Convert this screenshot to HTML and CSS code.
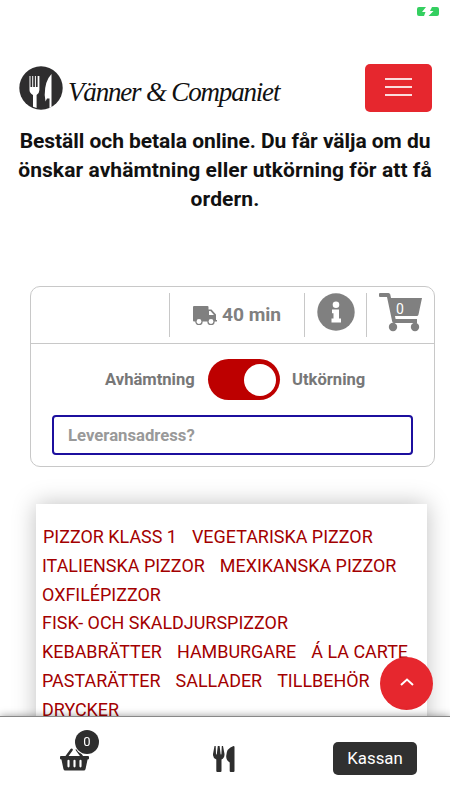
FILE: index.html
```html
<!DOCTYPE html>
<html lang="sv">
<head>
<meta charset="utf-8">
<meta name="viewport" content="width=device-width, initial-scale=1">
<title>Vänner &amp; Companiet</title>
<link rel="stylesheet" href="styles.css">
</head>
<body>
<svg class="battery" viewBox="0 0 22 9"><path d="M2 0h7L5 5h3.500L7 9H2Q0 9 0 7V2Q0 0 2 0ZM15 0h5q2 0 2 2v5q0 2-2 2h-8.500l5-5h-3.500Z"/></svg>
<header class="header">
  <div class="brand">
    <svg class="brand-mark" viewBox="0 0 44 44"><circle cx="22" cy="22" r="21.700" fill="#2e2d2e"/><path fill="#fff" d="M10.500 10h1v11h1.700V10h1v11h1.700V10h1v11h1.700V10h1.800v14q0 3-2.800 5V42l-3.600-1.200V29q-3.500-2-3.500-5ZM32.500 8V41l-2 1V32.500H28l-1.500 3-.8-6.500q0-14 6.800-21Z"/></svg>
    <span class="brand-name">Vänner &amp; Companiet</span>
  </div>
  <button class="menu-button" aria-label="Meny"><i></i><i></i><i></i></button>
</header>
<h1 class="intro"><span class="l1">Beställ och betala online. Du får välja om du</span><span class="l2">önskar avhämtning eller utkörning för att få</span><span class="l3">ordern.</span></h1>
<section class="order">
  <div class="order-top">
    <div class="cell"></div>
    <div class="cell time"><svg viewBox="0 0 24 19"><path fill="#808080" fill-rule="evenodd" d="M1 0H14.500q1 0 1 1v2.500h3l4.500 5V14h1v1.500H1Q0 15.500 0 14.500V1Q0 0 1 0ZM16 5v4h5l-3.500-4Z"/><g fill="#fff" stroke="#808080" stroke-width="1.300"><circle cx="6" cy="15.500" r="3.100"/><circle cx="18" cy="15.500" r="3.100"/></g></svg><span>40 min</span></div>
    <div class="cell"><svg class="info" viewBox="0 0 38 38"><circle cx="19" cy="19" r="18.700" fill="#808080"/><path fill="#fff" d="M15 16.500h7v9h2v4h-9.500v-4h2v-5.200H15Z"/><circle cx="19" cy="11.800" r="3.300" fill="#fff"/></svg></div>
    <div class="cell cart"><svg viewBox="0 0 43 39"><path fill="#808080" d="M1 0h8.500q1.300 0 1.800 1.500L12 5h31l-3.500 16.500q-.3 1.500-1.800 1.500H16l.6 3H38v4H15q-1.500 0-1.800-1.500L8 4H1Q0 4 0 3V1Q0 0 1 0Z"/><circle cx="14" cy="34" r="4.200" fill="#808080"/><circle cx="36" cy="34" r="4.200" fill="#808080"/></svg><span>0</span></div>
  </div>
  <div class="choice"><span class="pick">Avhämtning</span><span class="switch"></span><span>Utkörning</span></div>
  <input class="address" type="text" placeholder="Leveransadress?">
</section>
<nav class="categories">
  <div class="first"><a>PIZZOR KLASS 1</a><a>VEGETARISKA PIZZOR</a></div>
  <div><a>ITALIENSKA PIZZOR</a><a>MEXIKANSKA PIZZOR</a></div>
  <div><a>OXFILÉPIZZOR</a></div>
  <div><a>FISK- OCH SKALDJURSPIZZOR</a></div>
  <div><a>KEBABRÄTTER</a><a>HAMBURGARE</a><a>Á LA CARTE</a></div>
  <div><a>PASTARÄTTER</a><a>SALLADER</a><a>TILLBEHÖR</a></div>
  <div><a>DRYCKER</a></div>
</nav>
<button class="to-top" aria-label="Till toppen"><svg viewBox="0 0 14 8"><path d="M1 7l6-5.500L13 7" fill="none" stroke="#fff" stroke-width="2"/></svg></button>
<footer class="bottom-bar">
  <div class="basket"><svg viewBox="0 0 30 25"><path d="M6.500 11L12 3.500M23 11L17.500 3.500" fill="none" stroke="#2e2e2e" stroke-width="2.600" stroke-linecap="round"/><path fill="#2e2e2e" d="M1 10h28q1 0 1 1v1.500q0 1-1.500 1L26.500 23q-.3 2-2 2h-19q-1.700 0-2-2L1.500 13.500Q0 13.500 0 12.500V11q0-1 1-1Z"/><path d="M8.800 14.800v5.800M15 14.800v5.800M21.200 14.800v5.800" stroke="#fff" stroke-width="2.200" stroke-linecap="round"/></svg><span class="badge">0</span></div>
  <svg class="cutlery" viewBox="0 0 22 26"><path fill="#2e2e2e" d="M1.500 0h1.200L3 8q.4 1 .8 0L4.800 0h1.800l1 8q.4 1 .8 0L8.800 0H10l1.500 8q.2 4-3 5.500V25q0 1-1 1H4.300q-1 0-1-1V13.500Q-.3 12 0 8ZM21.500 1V25q0 1-1 1H17.700q-1 0-1-1v-8.500Q13 14 13.200 10 13.500 2 20.500 0q1 0 1 1Z"/></svg>
  <button class="checkout">Kassan</button>
</footer>
</body>
</html>
```
FILE: styles.css
```css
* { box-sizing: border-box; }
body {
  margin: 0;
  width: 450px;
  height: 800px;
  overflow: hidden;
  background: #fff;
  font-family: Roboto, "Liberation Sans", sans-serif;
}
button { border: 0; padding: 0; font: inherit; }
svg { display: block; }
.battery { position: absolute; left: 417px; top: 7px; width: 22px; height: 9px; fill: #34cf60; }
.header {
  display: flex;
  justify-content: space-between;
  align-items: flex-start;
  padding: 64px 18px 0 19px;
  height: 127px;
}
.brand { display: flex; align-items: flex-start; margin-top: 2px; gap: 5px; }
.brand-mark { width: 44px; height: 44px; }
.brand-name {
  font-family: "Z003", "URW Chancery L", "Liberation Serif", serif;
  font-style: italic;
  font-size: 27px;
  line-height: 52px;
  letter-spacing: -1.18px;
  white-space: nowrap;
  color: #111;
}
.menu-button {
  width: 67px;
  height: 48px;
  border-radius: 5px;
  background: #e6272e;
  display: flex;
  flex-direction: column;
  align-items: center;
  justify-content: center;
  gap: 6px;
  padding-bottom: 2px;
}
.menu-button i { width: 27px; height: 2px; background: #fbdcdd; }
.intro {
  margin: 0;
  font-size: 21px;
  line-height: 29px;
  font-weight: 700;
  text-align: center;
  color: #111;
  white-space: nowrap;
}
.intro span { display: block; }
.l1 { letter-spacing: -0.05px; }
.l2 { letter-spacing: 0.07px; }
.l3 { letter-spacing: 0.1px; }
.order {
  margin: 72px 15px 0 30px;
  height: 181px;
  border: 1px solid #c8c8c8;
  border-radius: 10px;
}
.order-top {
  height: 57px;
  border-bottom: 1px solid #c8c8c8;
  display: grid;
  grid-template-columns: 138px 135px 62px 1fr;
  padding: 6px 0;
}
.cell { display: flex; align-items: center; justify-content: center; }
.cell + .cell { border-left: 1px solid #c8c8c8; }
.time { gap: 5px; padding-bottom: 1px; font-size: 19.2px; font-weight: 700; color: #808080; }
.time svg { width: 24px; height: 19px; margin-top: 1px; }
.info { width: 38px; height: 38px; margin-top: -6px; }
.cart { position: relative; }
.cart svg { width: 43px; height: 39px; margin-top: -6px; }
.cart span { position: absolute; left: 29px; top: 7px; font-size: 14px; line-height: 18px; color: #fff; }
.choice {
  display: flex;
  align-items: center;
  height: 41px;
  margin: 15px 0 0 74px;
  gap: 12px;
  color: #777;
  font-size: 16.6px;
  font-weight: 700;
}
.pick { width: 91px; }
.switch {
  width: 72px;
  height: 41px;
  border-radius: 21px;
  background: #bd0000;
  display: flex;
  justify-content: flex-end;
  padding: 4.5px;
}
.switch::before { content: ""; width: 32px; height: 32px; border-radius: 50%; background: #fff; }
.address {
  display: block;
  width: 361px;
  height: 40px;
  margin: 15px 0 0 21px;
  border: 2px solid #1c0f9e;
  border-radius: 4px;
  padding: 0 14px;
  font: 700 16.7px Roboto, sans-serif;
  background: #fff;
}
.address::placeholder { color: #999; opacity: 1; }
.categories {
  margin: 37px 23px 0 36px;
  height: 270px;
  padding: 19px 6px 0;
  background: #fff;
  box-shadow: 0 0 22px rgba(0, 0, 0, 0.25);
  color: #a30000;
  font-size: 17.95px;
  line-height: 28.8px;
  white-space: nowrap;
}
.categories div { display: flex; gap: 15px; }
.first { padding-left: 1px; }
.to-top {
  position: fixed;
  left: 380px;
  top: 657px;
  width: 53px;
  height: 53px;
  border-radius: 50%;
  background: #e6272e;
  display: grid;
  place-items: center;
}
.to-top svg { width: 14px; height: 8px; margin-top: -4px; }
.bottom-bar {
  position: fixed;
  left: 0;
  right: 0;
  bottom: 0;
  height: 84px;
  display: flex;
  align-items: flex-start;
  padding: 25px 33px 0 60px;
  background: #fff;
  border-top: 1px solid #888;
  box-shadow: 0 0 8px rgba(0, 0, 0, 0.4);
}
.basket { position: relative; width: 153px; height: 32px; padding-top: 4px; }
.basket svg { width: 29px; height: 25px; }
.badge {
  position: absolute;
  left: 15px;
  top: -12px;
  width: 24px;
  height: 24px;
  border-radius: 50%;
  background: #2e2e2e;
  box-shadow: 0 0 0 1px #fff;
  color: #fff;
  font-size: 13px;
  line-height: 24px;
  text-align: center;
}
.cutlery { width: 22px; height: 26px; margin-top: 4px; }
.checkout {
  width: 84px;
  height: 33px;
  margin-left: auto;
  padding-bottom: 2px;
  border-radius: 5px;
  background: #303030;
  color: #fff;
  font-size: 16.8px;
}
```
